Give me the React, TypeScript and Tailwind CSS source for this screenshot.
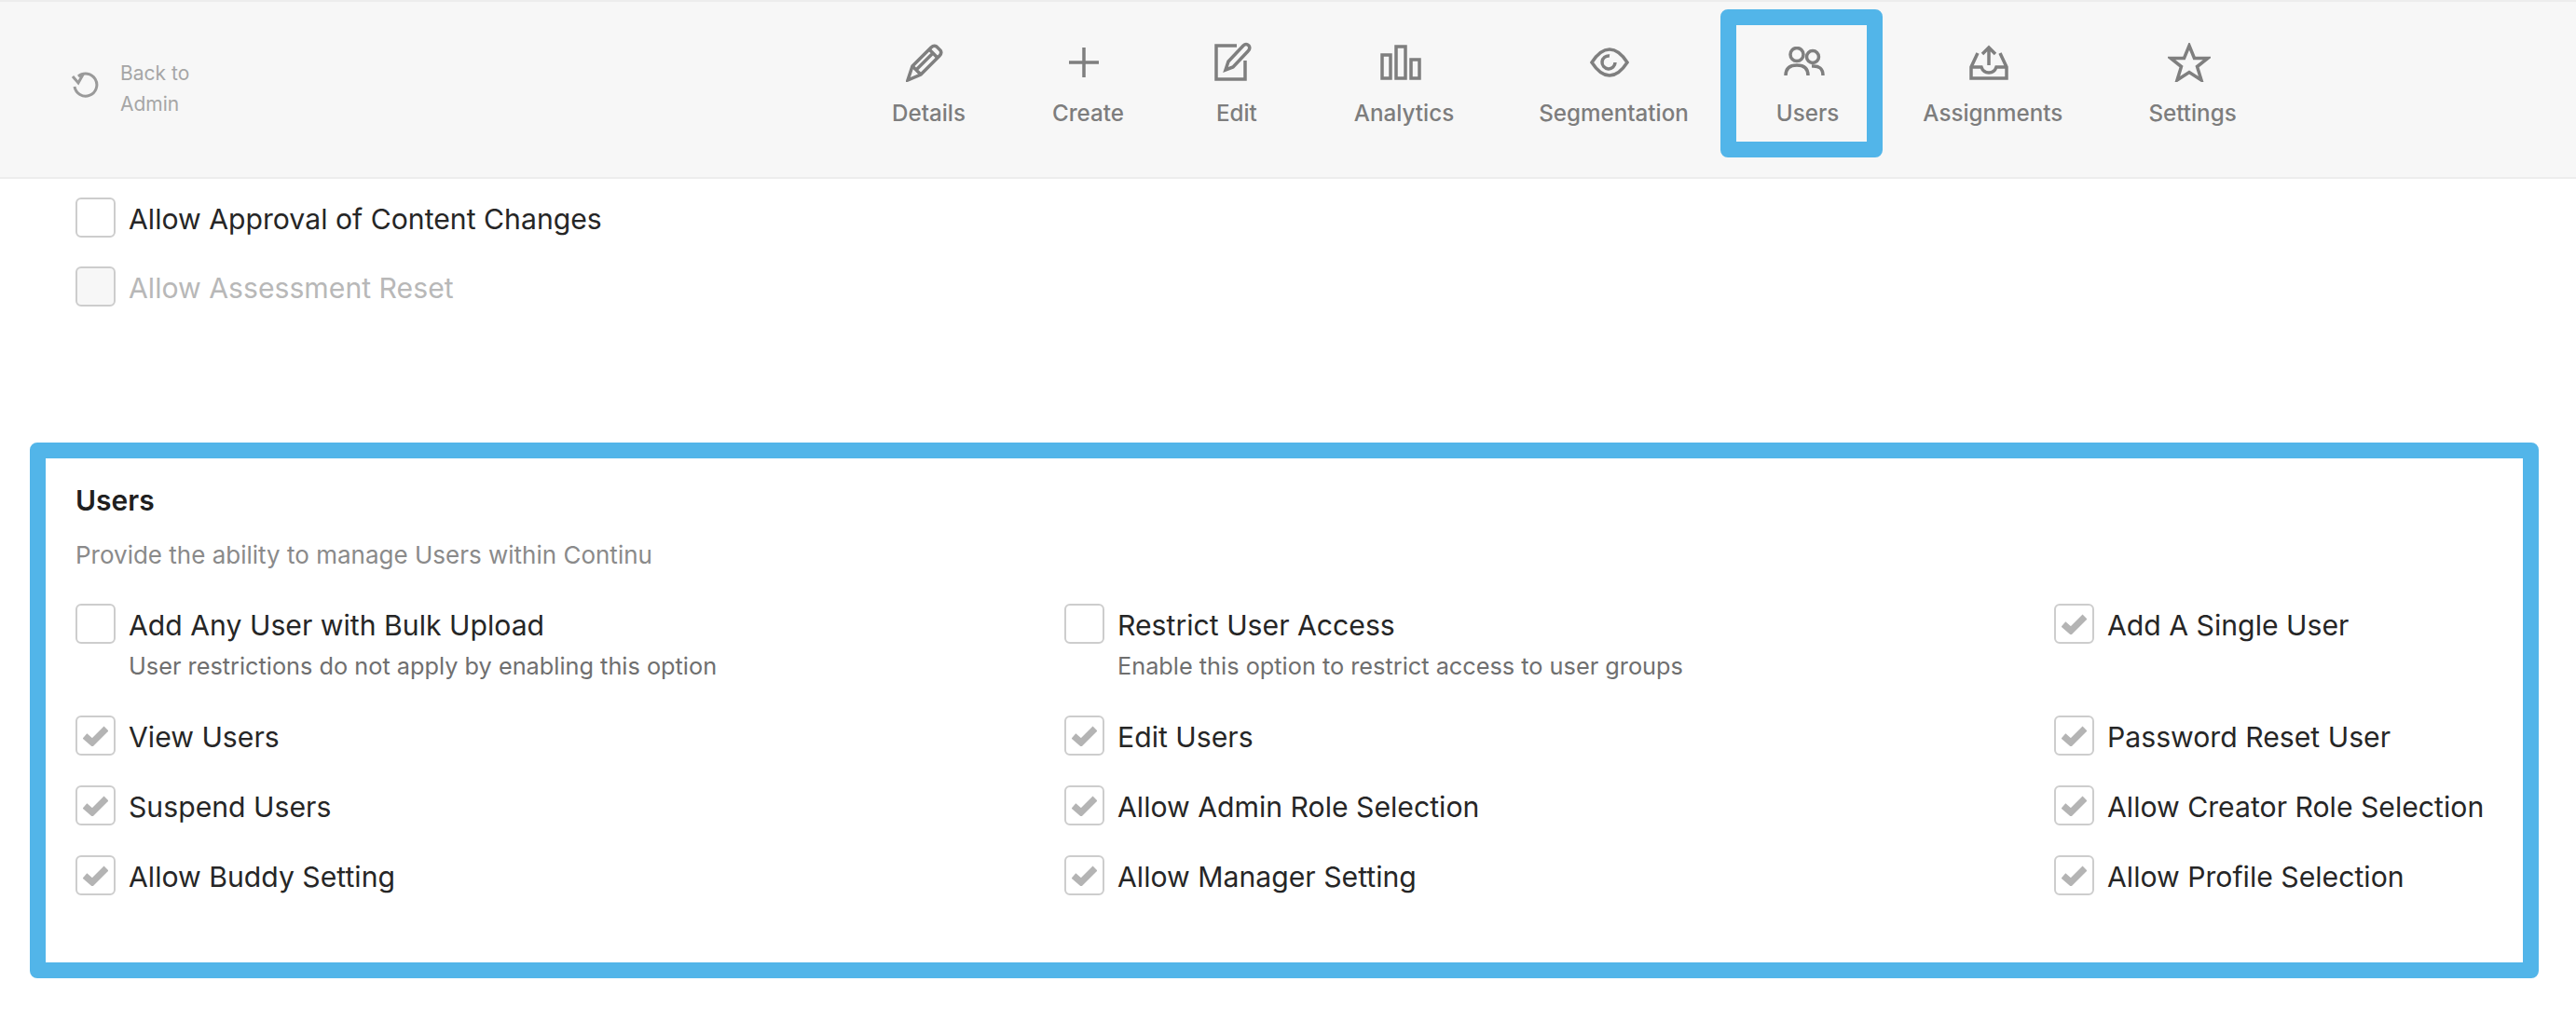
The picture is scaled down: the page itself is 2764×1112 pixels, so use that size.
import type { ReactNode } from 'react'

const ICON = 'fill-none stroke-[#7f7f7f] stroke-[3.5]'

const NAV_ITEMS: { label: string; active?: boolean; mr: string; icon: ReactNode }[] = [
  {
    label: 'Details',
    mr: 'mr-[93px]',
    icon: (
      <svg width="40" height="42" viewBox="0 0 40 42" className={ICON}>
        <path d="M2 40 L7 25 L27 5 Q30 2 33 4 L37 8 Q39 11 36 14 L16 34 Z" />
        <path d="M7 25 L16 34 M11 29 L30 10 M25 7 L34 16" />
      </svg>
    ),
  },
  {
    label: 'Create',
    mr: 'mr-[99px]',
    icon: (
      <svg width="32" height="32" viewBox="0 0 32 32" className={ICON}>
        <path d="M0 16 H32 M16 0 V32" />
      </svg>
    ),
  },
  {
    label: 'Edit',
    mr: 'mr-[104px]',
    icon: (
      <svg width="40" height="42" viewBox="0 0 40 42" className={`mb-[3px] ${ICON}`}>
        <path d="M24 4 H2 V40 H33 V20" />
        <path d="M12 30 L15 21 L31 4 Q34 1 37 4 Q39 7 36 10 L20 27 Z" />
      </svg>
    ),
  },
  {
    label: 'Analytics',
    mr: 'mr-[91px]',
    icon: (
      <svg width="44" height="38" viewBox="0 0 44 38" className={ICON}>
        <path d="M2 11 H11 V36 H2 Z M17 2 H27 V36 H17 Z M33 16 H42 V36 H33 Z" />
      </svg>
    ),
  },
  {
    label: 'Segmentation',
    mr: 'mr-[94px]',
    icon: (
      <svg width="42" height="32" viewBox="0 0 42 32" className={ICON}>
        <path d="M2 16 Q11 2 21 2 Q31 2 40 16 Q31 30 21 30 Q11 30 2 16 Z" />
        <path d="M27 16 A7 7 0 1 1 21 9" />
      </svg>
    ),
  },
  {
    label: 'Users',
    active: true,
    mr: 'mr-[90px]',
    icon: (
      <svg width="44" height="32" viewBox="0 0 44 32" className={`mb-[2px] ${ICON}`}>
        <circle cx="14" cy="8.5" r="7" />
        <circle cx="31" cy="11" r="6.5" />
        <path d="M2 31 Q2 20 14 20 Q26 20 26 31 M30 21 Q42 20 42 31" />
      </svg>
    ),
  },
  {
    label: 'Assignments',
    mr: 'mr-[92px]',
    icon: (
      <svg width="42" height="38" viewBox="0 0 42 38" className={ICON}>
        <path d="M9 9 L2 24 V36 H40 V24 L33 9" />
        <path d="M2 24 H13 Q15 30 21 30 Q27 30 29 24 H40" />
        <path d="M21 22 V3 M14 10 L21 3 L28 10" />
      </svg>
    ),
  },
  {
    label: 'Settings',
    mr: '',
    icon: (
      <svg width="46" height="42" viewBox="0 0 46 42" className={ICON}>
        <path d="M23 3 L28.5 16.5 L43 16.5 L31.5 25.5 L36 40 L23 31.5 L10 40 L14.5 25.5 L3 16.5 L17.5 16.5 Z" />
      </svg>
    ),
  },
]

const USER_OPTIONS = [
  { label: 'Add Any User with Bulk Upload', hint: 'User restrictions do not apply by enabling this option' },
  { label: 'Restrict User Access', hint: 'Enable this option to restrict access to user groups' },
  { label: 'Add A Single User', checked: true },
  { label: 'View Users', checked: true },
  { label: 'Edit Users', checked: true },
  { label: 'Password Reset User', checked: true },
  { label: 'Suspend Users', checked: true },
  { label: 'Allow Admin Role Selection', checked: true },
  { label: 'Allow Creator Role Selection', checked: true },
  { label: 'Allow Buddy Setting', checked: true },
  { label: 'Allow Manager Setting', checked: true },
  { label: 'Allow Profile Selection', checked: true },
]

function Option({ label, hint, checked, disabled }: { label: string; hint?: string; checked?: boolean; disabled?: boolean }) {
  return (
    <div className="flex items-start gap-[14px]">
      <span
        className={`flex h-[43px] w-[43px] shrink-0 items-center justify-center rounded-[6px] border-2 border-[#cdcdcd] ${
          disabled ? 'bg-[#f7f7f7]' : 'bg-white'
        }`}
      >
        {checked && (
          <svg width="27" height="22" viewBox="0 0 27 22" className="fill-none stroke-[#b4b4b4] stroke-[7]">
            <path d="M2 11 L10 18 L25 3" />
          </svg>
        )}
      </span>
      <div className="min-w-0">
        <p className={`h-[43px] text-[30.2px] leading-[46px] whitespace-nowrap ${disabled ? 'text-[#b8b8b8]' : 'text-[#262626]'}`}>{label}</p>
        {hint && <p className="mt-[8px] text-[25.3px] leading-[32px] whitespace-nowrap text-[#6f6f6f]">{hint}</p>}
      </div>
    </div>
  )
}

export default function App() {
  return (
    <div className="h-[1112px] w-[2764px] bg-white font-['Inter',sans-serif]">
      <header className="flex h-[192px] items-start border-y-2 border-[#ededed] bg-[#f7f7f7]">
        <div className="mt-[60px] ml-[76px] flex w-[881px] items-center gap-[23px] text-[#a6a6a6]">
          <svg width="30" height="28" viewBox="0 0 30 28" className="mb-[8px] fill-none stroke-[#9a9a9a] stroke-[3]">
            <path d="M8 5 A12 12 0 1 1 4 16" />
            <path d="M2 5 L8 12 L13 3" />
          </svg>
          <div className="text-[21px] leading-[33px]">
            <p>Back to</p>
            <p>Admin</p>
          </div>
        </div>
        <nav className="flex pt-[42px]">
          {NAV_ITEMS.map((item) => (
            <div key={item.label} className={`relative flex flex-col items-center ${item.mr}`}>
              <div className="flex h-[46px] -translate-x-[4px] items-center">{item.icon}</div>
              <span className="mt-[15px] text-[24.2px] leading-[34px] font-medium whitespace-nowrap text-[#7d7d7d]">{item.label}</span>
              {item.active && (
                <div className="absolute top-[-34px] left-[-60px] h-[159px] w-[174px] rounded-[8px] border-[17px] border-[#52b5e9]" />
              )}
            </div>
          ))}
        </nav>
      </header>

      <section className="flex flex-col gap-[31px] pt-[20px] pl-[81px]">
        <Option label="Allow Approval of Content Changes" />
        <Option label="Allow Assessment Reset" disabled />
      </section>

      <section className="mr-[40px] ml-[32px] mt-[146px] h-[575px] rounded-[8px] border-[17px] border-[#52b5e9] pt-[26px] pl-[32px]">
        <h2 className="text-[30px] leading-[38px] font-semibold text-[#1f1f1f]">Users</h2>
        <p className="mt-[23px] text-[26px] leading-[34px] text-[#8a8a8a]">Provide the ability to manage Users within Continu</p>
        <div className="mt-[35px] grid grid-cols-[1061px_1062px_1fr] grid-rows-[88px_43px_43px_43px] gap-y-[32px]">
          {USER_OPTIONS.map((option) => (
            <Option key={option.label} {...option} />
          ))}
        </div>
      </section>
    </div>
  )
}
